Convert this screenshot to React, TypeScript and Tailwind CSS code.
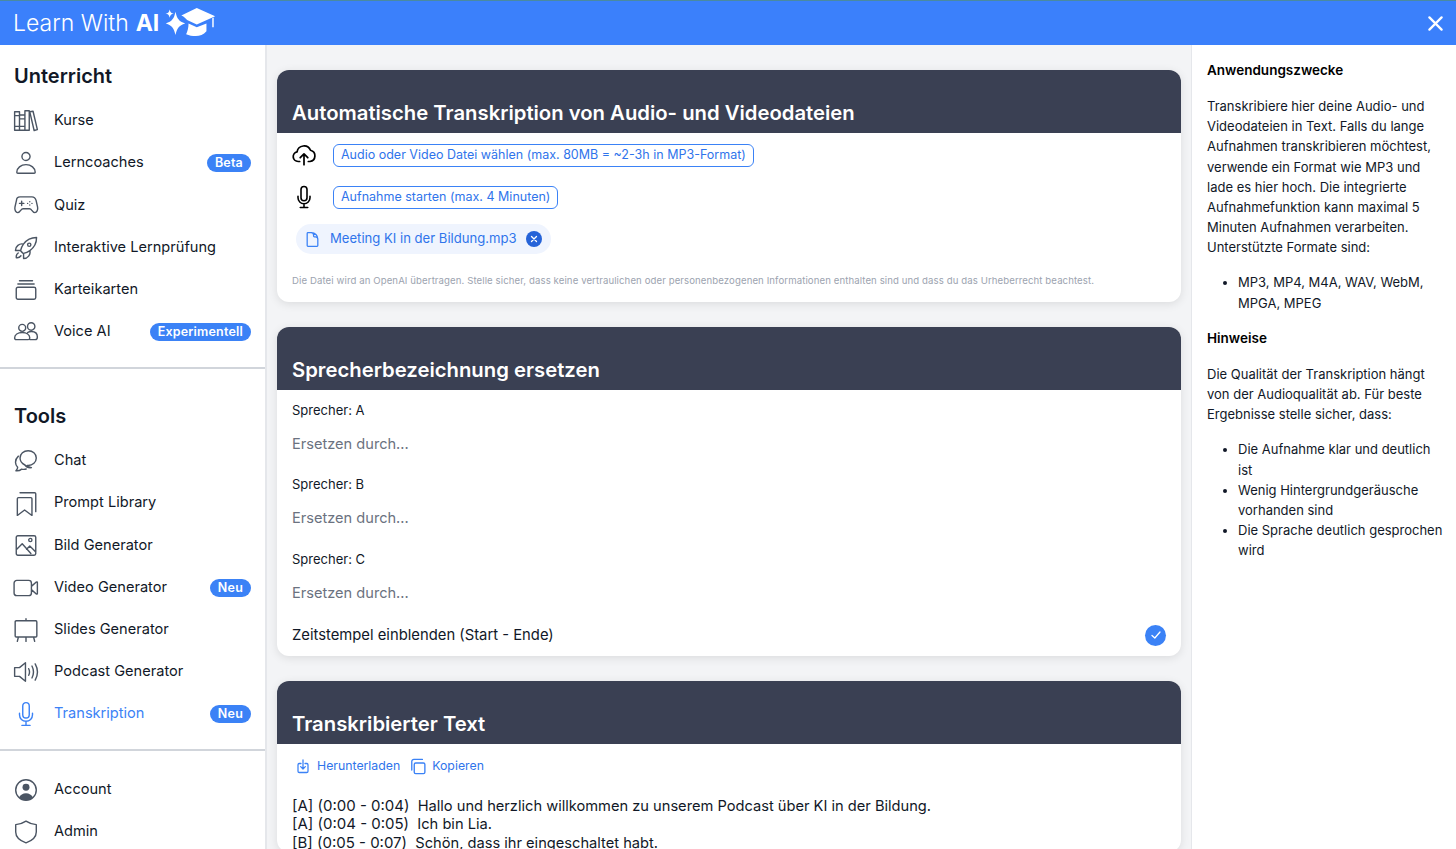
import React from "react";

type IconProps = { d: string; className?: string; sw?: number };

const Icon = ({ d, className = "w-[26px] h-[26px] text-[#4b5563]", sw = 1.3 }: IconProps) => (
    <svg viewBox="0 0 24 24" fill="none" stroke="currentColor" strokeWidth={sw} strokeLinecap="round" strokeLinejoin="round" className={className}>
        <path d={d} />
    </svg>
);

const paths = {
    books: "M1.500 3.500h4.500v17H1.500zM6 6.500h5v14H6zM11 2.500h4v18h-4zM15.500 3.500l3-.5 4 17-3 .8zM1.500 7h4.500M1.500 17h4.500M6 10h5M6 17h5",
    user: "M15.750 6a3.750 3.750 0 1 1-7.500 0 3.750 3.750 0 0 1 7.500 0ZM3.500 20.500a8.500 7 0 0 1 17 0c0 .6-.4 1-1 1h-15c-.6 0-1-.4-1-1Z",
    game: "M6.500 4.500h11c2 0 3.200 1.300 3.800 3.200l1.400 6.300c.5 2.400-.8 5-2.500 5-1.400 0-2.200-1-3-2.200-.5-.8-1-1.300-2-1.300H9.300c-1 0-1.500.5-2 1.300-.8 1.200-1.600 2.200-3 2.200-1.700 0-3-2.600-2.500-5l1.400-6.300C3.300 5.800 4.500 4.500 6.500 4.500ZM6 10.500h4M8 8.500v4M15.500 9h.01M17.500 10.500h.01M15.500 12h.01M13.500 10.500h.01",
    rocket: "M15.590 14.370a6 6 0 0 1-5.840 7.380v-4.800m5.840-2.580a14.980 14.980 0 0 0 6.160-12.120A14.980 14.980 0 0 0 9.631 8.410m5.960 5.960a14.926 14.926 0 0 1-5.841 2.580m-.119-8.540a6 6 0 0 0-7.381 5.840h4.800m2.581-5.840a14.927 14.927 0 0 0-2.580 5.840m2.699 2.700c-.103.021-.207.041-.311.060a15.090 15.090 0 0 1-2.448-2.448 14.900 14.900 0 0 1 .060-.312m-2.240 2.390a4.493 4.493 0 0 0-1.757 4.306 4.493 4.493 0 0 0 4.306-1.758M16.500 9a1.500 1.500 0 1 1-3 0 1.500 1.500 0 0 1 3 0Z",
    stack: "M6 3.500h12M4.500 6.500h15M4.500 9.500h15A1.500 1.500 0 0 1 21 11v8a1.500 1.500 0 0 1-1.500 1.500h-15A1.500 1.500 0 0 1 3 19v-8a1.500 1.500 0 0 1 1.500-1.500Z",
    users: "M8.500 5a3.200 3.200 0 1 1 0 6.400 3.200 3.200 0 0 1 0-6.400ZM16.800 3.500a3.400 3.400 0 1 1 0 6.800 3.400 3.400 0 0 1 0-6.800ZM1.500 17.500c0-3 3-5 7-5 4 0 7 2 7 5 0 1-.6 1.500-1.500 1.500H3c-.9 0-1.500-.5-1.500-1.500ZM13.500 12.500c1-.7 2.200-1 3.500-1 3.300 0 5.500 2 5.500 5 0 1.500-1 2.500-2 2.500h-5",
    chat: "M14 2.500c4.200 0 7.500 3 7.500 6.800 0 3.800-3.300 6.800-7.500 6.800-.3 0-.6 0-.9 0 .9 1 2.400 1.700 3.900 2-2.400.3-4.700-.4-6-2.400-2.500-1.200-4.500-3.500-4.500-6.400 0-3.800 3.300-6.800 7.500-6.800ZM5 7.500C3.300 9 2.300 11 2.300 13.200c0 1.800.8 3.300 2 4.500 0 1.200-.6 2.400-1.600 3.300 2 .2 4-.4 5.300-1.500 1.300.3 3 .3 4.200-.1",
    bookmark: "M5 7h11.500a1 1 0 0 1 1 1v15.500l-6.800-5-6.700 5V8a1 1 0 0 1 1-1ZM6.500 2.500H20a1 1 0 0 1 1 1V20",
    photo: "M4.500 2.500h15A1.500 1.500 0 0 1 21 4v15a1.500 1.500 0 0 1-1.500 1.500h-15A1.500 1.500 0 0 1 3 19V4a1.500 1.500 0 0 1 1.500-1.500ZM3 15.500l5.500-5.500 8 9M12.500 15l3-3 5.500 5.500M17.500 6.500a1.500 1.500 0 1 1-3 0 1.500 1.500 0 0 1 3 0Z",
    video: "M3.500 5h11a2.500 2.500 0 0 1 2.500 2.500v9a2.500 2.500 0 0 1-2.500 2.500h-11A2.500 2.500 0 0 1 1 16.500v-9A2.500 2.500 0 0 1 3.500 5ZM17 10.500l4.500-4c.5-.3 1 0 1 .5v10c0 .5-.5.8-1 .5L17 13.500",
    easel: "M12 1.500v2M3 3.500h18a1 1 0 0 1 1 1v13a1 1 0 0 1-1 1H3a1 1 0 0 1-1-1v-13a1 1 0 0 1 1-1ZM5 18.500l-1 4M12 18.500v4M19 18.500l1 4",
    speaker: "M11.500 3.500v17l-5.500-4.500H1.500V8H6ZM14.500 9c1 2 1 4 0 6M17.500 6.500c1.800 3.500 1.800 7.500 0 11M20.500 4.500c2.500 4.500 2.500 10.500 0 15",
    mic: "M12 18.750a6 6 0 0 0 6-6v-1.500m-6 7.500a6 6 0 0 1-6-6v-1.500m6 7.500v3.750m-3.750 0h7.500M12 15.750a3 3 0 0 1-3-3V4.500a3 3 0 1 1 6 0v8.250a3 3 0 0 1-3 3Z",
    shield: "M12 2c3 2 6 3 9.500 3.200V12c0 4.500-3.800 8-9.500 10-5.700-2-9.500-5.500-9.500-10V5.200C6 5 9 4 12 2Z",
    cloud: "M12 21V11m0 0-3.500 3.500M12 11l3.500 3.500M8 18H6.500A4.500 4.500 0 0 1 5.600 9.100 6.500 6.500 0 0 1 18 7.600 5.300 5.300 0 0 1 17.500 18H16",
    file: "M19.500 14.250v-2.625a3.375 3.375 0 0 0-3.375-3.375h-1.500A1.125 1.125 0 0 1 13.500 7.125v-1.500a3.375 3.375 0 0 0-3.375-3.375H8.250m2.250 0H5.625c-.621 0-1.125.504-1.125 1.125v17.250c0 .621.504 1.125 1.125 1.125h12.750c.621 0 1.125-.504 1.125-1.125V11.250a9 9 0 0 0-9-9Z",
    download: "M9 8.250H6.500a2 2 0 0 0-2 2v9.500a2 2 0 0 0 2 2h11a2 2 0 0 0 2-2v-9.500a2 2 0 0 0-2-2H15M8.500 13l3.500 3.500 3.500-3.500M12 16.500V3",
    copy: "M8 7h11a2 2 0 0 1 2 2v11a2 2 0 0 1-2 2H8a2 2 0 0 1-2-2V9a2 2 0 0 1 2-2ZM2.500 17V5a3 3 0 0 1 3-3h12",
};

const Badge = ({ label }: { label: string }) => (
    <span className="ml-auto h-[18px] px-2 rounded-full bg-[#3b82f6] text-white text-[12.5px] font-semibold leading-[18px] tracking-[0.2px]">{label}</span>
);

const NavRow = ({ icon, label, badge, active }: { icon: React.ReactNode; label: string; badge?: string; active?: boolean }) => (
    <div className="h-[42.2px] flex items-center">
        <div className="w-[40px] shrink-0 -ml-px">{icon}</div>
        <span className={active ? "ml-px text-[14.6px] text-[#3b82f6]" : "ml-px text-[14.6px] text-[#111827]"}>{label}</span>
        {badge && <Badge label={badge} />}
    </div>
);

const NavItem = ({ d, label, badge, active }: { d: string; label: string; badge?: string; active?: boolean }) => (
    <NavRow
        icon={<Icon d={d} className={active ? "w-[26px] h-[26px] text-[#3b82f6]" : "w-[26px] h-[26px] text-[#4b5563]"} />}
        label={label}
        badge={badge}
        active={active}
    />
);

const AccountIcon = () => (
    <svg viewBox="0 0 24 24" className="w-[26px] h-[26px] text-[#4b5563]">
        <circle cx="12" cy="12" r="9.500" fill="none" stroke="currentColor" strokeWidth={1.3} />
        <circle cx="12" cy="9.500" r="3.200" fill="currentColor" />
        <path d="M5.500 18.900c1.200-2.400 3.600-3.900 6.500-3.900s5.300 1.500 6.500 3.900a9.500 9.500 0 0 1-13 0Z" fill="currentColor" />
    </svg>
);

const Logo = () => (
    <svg viewBox="0 0 62 39" className="w-[60px] h-[38px] ml-px text-white" fill="currentColor">
        <path d="M10 5.500c.6 2.800 1.500 3.700 4.300 4.300-2.800.6-3.700 1.500-4.300 4.300-.6-2.800-1.500-3.700-4.300-4.300 2.800-.6 3.700-1.500 4.300-4.300Z" />
        <path d="M16 8c1.500 7 3.500 10 10 12-6.500 2-8.500 5-10 12-1.500-7-3.500-10-10-12 6.500-2 8.500-5 10-12Z" />
        <path d="M38 4 57 12.500 38 21l-10-4.500c-1.500-2-3.500-3.800-6-4.800Z" />
        <path d="M29.500 20 38 24l10-4v8c-3 3.500-7 5-11 5-3.500 0-7-.8-10-2 1.600-3 2.400-6.500 2.500-11Z" />
        <path d="M54 14.500V24h1.500V13.800Z" />
    </svg>
);

const Card = ({ title, children }: { title: string; children: React.ReactNode }) => (
    <section className="rounded-xl bg-white shadow-[0_2px_10px_rgba(0,0,0,0.1)] overflow-hidden shrink-0">
        <div className="h-[63px] bg-[#3a4053] px-[15px] flex items-end pb-[5px]">
            <h2 className="text-[20.3px] leading-[30px] font-semibold text-white">{title}</h2>
        </div>
        {children}
    </section>
);

const SpeakerField = ({ name }: { name: string }) => (
    <div className="h-[74.4px]">
        <div className="h-[20px] text-[13px] leading-[20px] text-[#111827]">Sprecher: {name}</div>
        <div className="mt-[14px] h-[20px] text-[14.6px] leading-[20px] text-[#6b7280]">Ersetzen durch...</div>
    </div>
);

const TranscriptLine = ({ time, text }: { time: string; text: string }) => (
    <div>
        {time}
        <span className="text-[14.65px]">{"  " + text}</span>
    </div>
);

export default function App() {
    return (
        <div className="w-[1456px] h-[849px] overflow-hidden flex flex-col bg-white font-['Inter',sans-serif]">
            {/* Top bar */}
            <header className="h-[45px] shrink-0 border-t border-[#4a8aa0] bg-[#3b80fb] flex items-center pl-[13px] pr-[13px]">
                <span className="text-[23px] font-light text-white">Learn With</span>
                <span className="ml-[7px] text-[23px] font-bold text-white">AI</span>
                <Logo />
                <svg viewBox="0 0 16 16" className="ml-auto w-[15px] h-[15px] text-white" fill="none" stroke="currentColor" strokeWidth={2.4} strokeLinecap="round">
                    <path d="M1.500 1.500l13 13M14.500 1.500l-13 13" />
                </svg>
            </header>

            <div className="flex flex-1 min-h-0">
                {/* Sidebar */}
                <aside className="w-[267px] shrink-0 border-r-2 border-[#e5e7eb]">
                    <div className="pl-[14px] pr-[14px]">
                        <h2 className="pt-[17px] h-[55px] text-[20px] leading-[28px] font-semibold text-[#111827]">Unterricht</h2>
                        <NavItem d={paths.books} label="Kurse" />
                        <NavItem d={paths.user} label="Lerncoaches" badge="Beta" />
                        <NavItem d={paths.game} label="Quiz" />
                        <NavItem d={paths.rocket} label="Interaktive Lernprüfung" />
                        <NavItem d={paths.stack} label="Karteikarten" />
                        <NavItem d={paths.users} label="Voice AI" badge="Experimentell" />
                    </div>
                    <div className="mt-[14px] h-[2px] bg-[#d1d5db]" />
                    <div className="pl-[14px] pr-[14px]">
                        <h2 className="pt-[33px] h-[71px] text-[20px] leading-[28px] font-semibold text-[#111827]">Tools</h2>
                        <NavItem d={paths.chat} label="Chat" />
                        <NavItem d={paths.bookmark} label="Prompt Library" />
                        <NavItem d={paths.photo} label="Bild Generator" />
                        <NavItem d={paths.video} label="Video Generator" badge="Neu" />
                        <NavItem d={paths.easel} label="Slides Generator" />
                        <NavItem d={paths.speaker} label="Podcast Generator" />
                        <NavItem d={paths.mic} label="Transkription" badge="Neu" active />
                    </div>
                    <div className="mt-[14px] h-[2px] bg-[#d1d5db]" />
                    <div className="pl-[14px] pr-[14px] pt-[17px]">
                        <NavRow icon={<AccountIcon />} label="Account" />
                        <NavItem d={paths.shield} label="Admin" />
                    </div>
                </aside>

                {/* Main column */}
                <main className="w-[924px] shrink-0 bg-[#f3f4f6] pt-[25px] pl-[10px] pr-[10px] flex flex-col gap-[25px] overflow-hidden">
                    <Card title="Automatische Transkription von Audio- und Videodateien">
                        <div className="h-[169px] px-[15px] pt-px">
                            <div className="h-[42px] flex items-center">
                                <Icon d={paths.cloud} sw={1.6} className="w-[26px] h-[26px] -ml-px text-black" />
                                <button className="ml-[16px] h-[23px] px-[7px] rounded-md border border-[#3b82f6] text-[12.5px] text-[#2f74eb]">
                                    Audio oder Video Datei wählen (max. 80MB = ~2-3h in MP3-Format)
                                </button>
                            </div>
                            <div className="h-[42px] flex items-center">
                                <Icon d={paths.mic} sw={1.6} className="w-[24px] h-[24px] text-black" />
                                <button className="ml-[17px] h-[23px] px-[7px] rounded-md border border-[#3b82f6] text-[12.5px] text-[#2f74eb]">
                                    Aufnahme starten (max. 4 Minuten)
                                </button>
                            </div>
                            <div className="ml-[4px] mt-[6px] w-fit h-[30px] rounded-full bg-[#eff4fe] pl-[8px] pr-[9px] flex items-center">
                                <Icon d={paths.file} sw={1.8} className="w-[17px] h-[17px] text-[#3b82f6]" />
                                <span className="ml-[9px] text-[13.1px] text-[#2f74eb]">Meeting KI in der Bildung.mp3</span>
                                <span className="ml-[9px] w-4 h-4 rounded-full bg-[#2563d8] flex items-center justify-center">
                                    <svg viewBox="0 0 8 8" className="w-2 h-2 text-white" fill="none" stroke="currentColor" strokeWidth={1.3} strokeLinecap="round">
                                        <path d="M1.500 1.500l5 5M6.500 1.500l-5 5" />
                                    </svg>
                                </span>
                            </div>
                            <p className="mt-[20px] text-[9.6px] leading-[14px] tracking-[0.1px] whitespace-nowrap text-[#9ca3af]">
                                Die Datei wird an OpenAI übertragen. Stelle sicher, dass keine vertraulichen oder personenbezogenen Informationen enthalten sind und dass du das Urheberrecht beachtest.
                            </p>
                        </div>
                    </Card>

                    <Card title="Sprecherbezeichnung ersetzen">
                        <div className="h-[266px] px-[15px] pt-[10px]">
                            <SpeakerField name="A" />
                            <SpeakerField name="B" />
                            <SpeakerField name="C" />
                            <div className="h-[22px] mt-[1px] flex items-center justify-between">
                                <span className="text-[14.8px] text-[#111827]">Zeitstempel einblenden (Start - Ende)</span>
                                <span className="w-[21px] h-[21px] rounded-full bg-[#3b82f6] flex items-center justify-center">
                                    <svg viewBox="0 0 12 12" className="w-3 h-3 text-white" fill="none" stroke="currentColor" strokeWidth={1.3} strokeLinecap="round" strokeLinejoin="round">
                                        <path d="M2 6.500l2.800 2.500L10 3" />
                                    </svg>
                                </span>
                            </div>
                        </div>
                    </Card>

                    <Card title="Transkribierter Text">
                        <div className="px-[15px] pt-[13px]">
                            <div className="h-[18px] flex items-center text-[12.3px] text-[#2f74eb]">
                                <Icon d={paths.download} sw={1.9} className="w-[16px] h-[16px] ml-[3px] text-[#3b82f6]" />
                                <span className="ml-[6px]">Herunterladen</span>
                                <Icon d={paths.copy} sw={1.9} className="w-[17px] h-[17px] ml-[10px] text-[#3b82f6]" />
                                <span className="ml-[5px]">Kopieren</span>
                            </div>
                            <div className="mt-[22px] text-[15px] leading-[18.3px] text-[#111827] whitespace-pre">
                                <TranscriptLine time="[A] (0:00 - 0:04)" text="Hallo und herzlich willkommen zu unserem Podcast über KI in der Bildung." />
                                <TranscriptLine time="[A] (0:04 - 0:05)" text="Ich bin Lia." />
                                <TranscriptLine time="[B] (0:05 - 0:07)" text="Schön, dass ihr eingeschaltet habt." />
                            </div>
                        </div>
                    </Card>
                </main>

                {/* Help column */}
                <aside className="flex-1 border-l border-[#e5e7eb] pl-[15px] pr-[10px] pt-[15px] text-[13px] leading-[20.15px] text-[#111827]">
                    <h3 className="text-[13.5px] font-semibold text-black">Anwendungszwecke</h3>
                    <p className="mt-[16px]">
                        Transkribiere hier deine Audio- und Videodateien in Text. Falls du lange Aufnahmen transkribieren möchtest, verwende ein Format wie MP3 und lade es hier hoch. Die integrierte Aufnahmefunktion kann maximal 5 Minuten Aufnahmen verarbeiten. Unterstützte Formate sind:
                    </p>
                    <ul className="mt-[15px] ml-[31px] list-disc">
                        <li>MP3, MP4, M4A, WAV, WebM, MPGA, MPEG</li>
                    </ul>
                    <h3 className="mt-[15px] text-[13.5px] font-semibold text-black">Hinweise</h3>
                    <p className="mt-[16px]">
                        Die Qualität der Transkription hängt von der Audioqualität ab. Für beste Ergebnisse stelle sicher, dass:
                    </p>
                    <ul className="mt-[15px] ml-[31px] list-disc">
                        <li>Die Aufnahme klar und deutlich ist</li>
                        <li>Wenig Hintergrundgeräusche vorhanden sind</li>
                        <li>Die Sprache deutlich gesprochen wird</li>
                    </ul>
                </aside>
            </div>
        </div>
    );
}
